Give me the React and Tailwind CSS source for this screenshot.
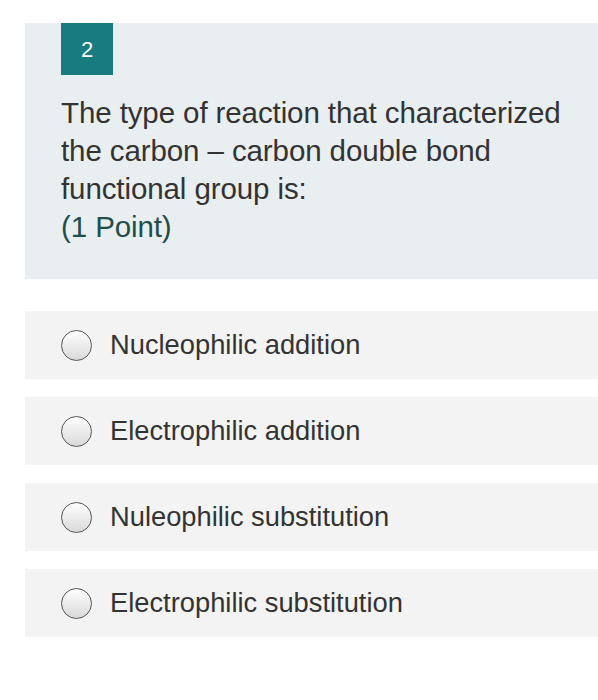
export default function App() {
  const options = [
    "Nucleophilic addition",
    "Electrophilic addition",
    "Nuleophilic substitution",
    "Electrophilic substitution",
  ];
  return (
    <div className="w-[598px] h-[700px] bg-white pt-[23px] pl-[25px] font-['Liberation_Sans',Arial,sans-serif]">
      <div className="bg-[#e9eef1] pl-[36px] h-[256px]">
        <div className="w-[52px] h-[52px] bg-[#177b80] flex items-center justify-center text-white text-[22px]">
          2
        </div>
        <div className="mt-[19px] text-[29.5px] leading-[38px] text-[#333333] tracking-[-0.1px]">
          <div className="w-[515px]">
            The type of reaction that characterized the carbon – carbon double bond functional group is:
          </div>
          <div className="text-[#1f4f4c]">(1 Point)</div>
        </div>
      </div>
      <div className="mt-[32px] flex flex-col gap-[18px]">
        {options.map((o) => (
          <div key={o} className="h-[68px] bg-[#f3f3f3] flex items-center pl-[36px]">
            <div className="w-[31px] h-[31px] rounded-full border-[1.5px] border-[#555] bg-gradient-to-b from-white to-[#d9d9d9]" />
            <div className="ml-[18px] text-[27.3px] text-[#333333] pt-[1px]">{o}</div>
          </div>
        ))}
      </div>
    </div>
  );
}
